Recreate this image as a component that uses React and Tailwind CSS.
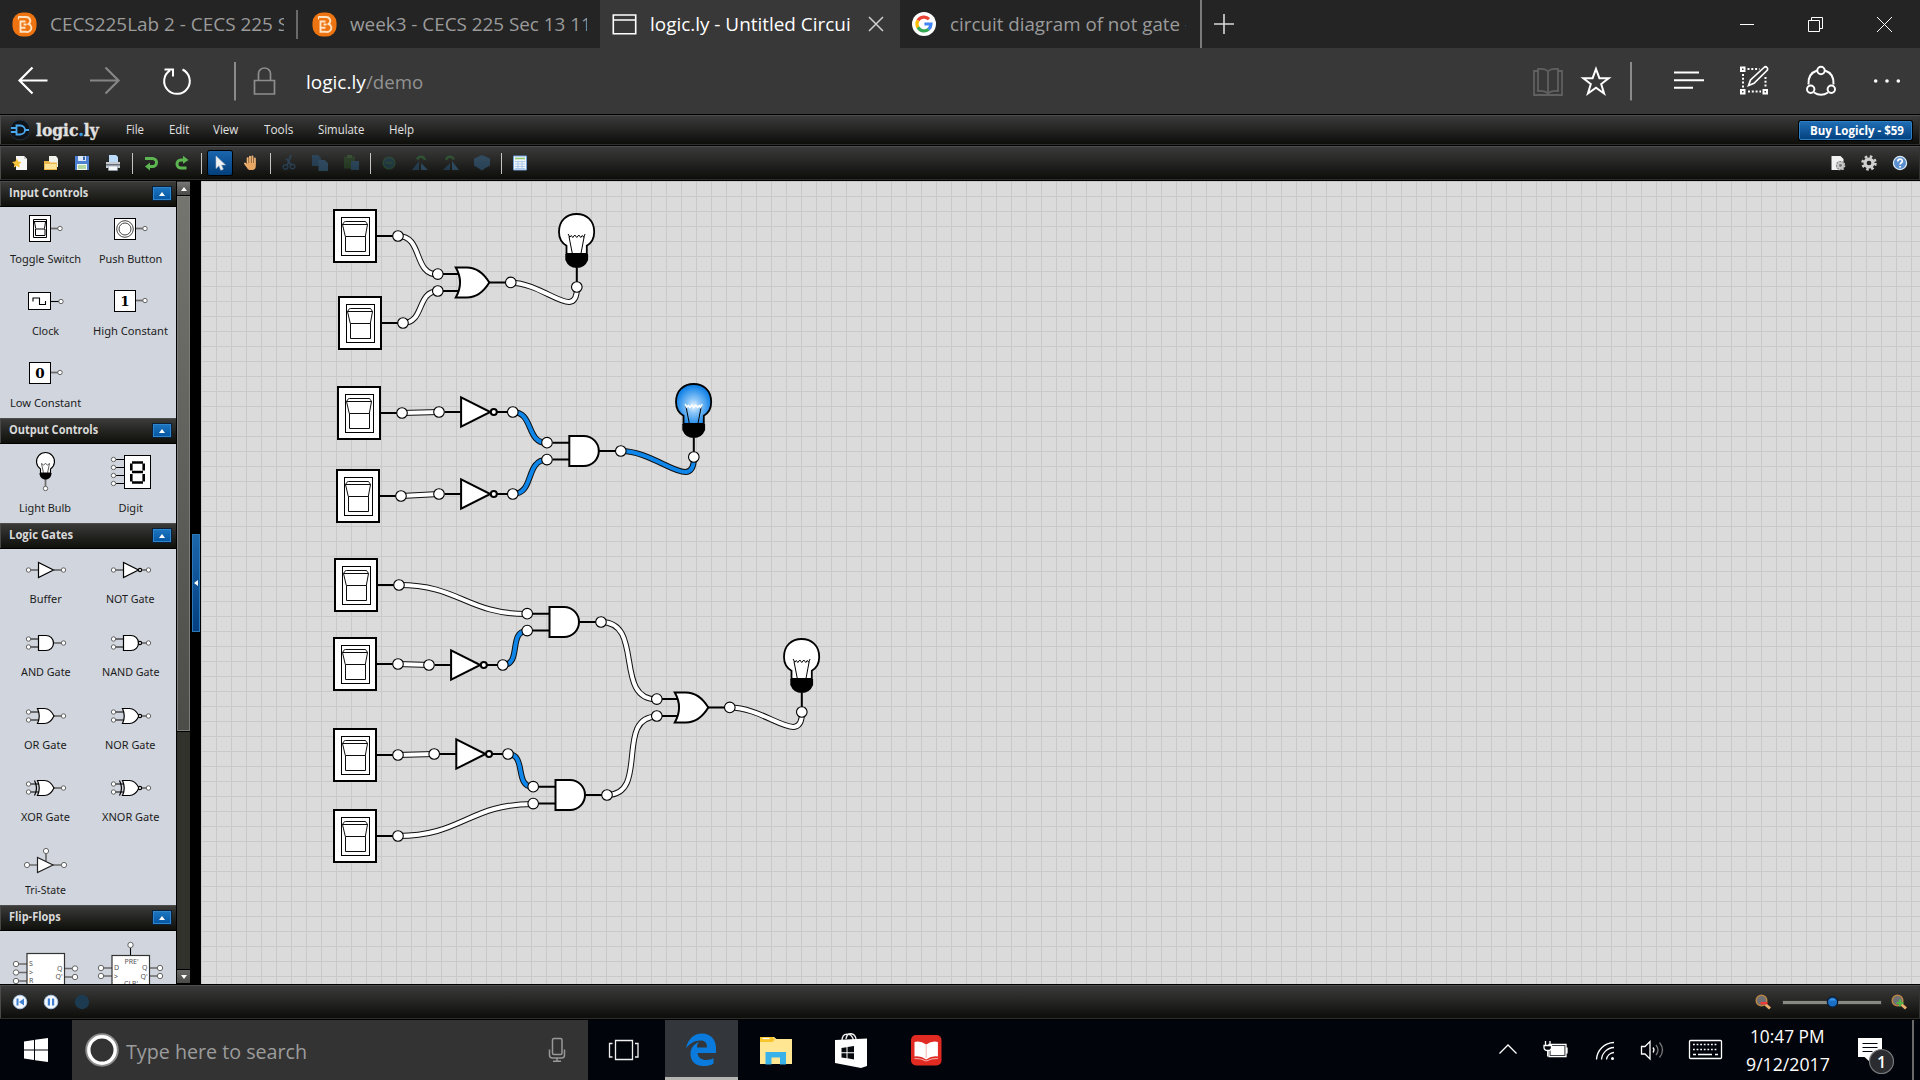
import React, { useLayoutEffect, useRef } from "react";

/* Text squeezed or stretched horizontally to a given width */
function Fit({ w, className = "", children }) {
  const ref = useRef(null);
  useLayoutEffect(() => {
    const el = ref.current;
    el.style.transform = `scaleX(${w / el.offsetWidth})`;
  }, [w, children]);
  return (
    <span className={"block whitespace-nowrap shrink-0 " + className} style={{ width: w }}>
      <span ref={ref} className="inline-block origin-left whitespace-pre">{children}</span>
    </span>
  );
}

/* ---------- Browser chrome ---------- */

function BFavicon() {
  return (
    <svg width="25" height="25" viewBox="0 0 25 25" className="shrink-0" fill="none">
      <rect x="0.5" y="0.5" width="24" height="24" rx="10" fill="#ee7411" />
      <path d="M6.500 5h7.500a4.200 3.900 0 0 1 2.600 7a4.300 4.100 0 0 1-2.600 7.800H8.500V9.500h5M8.500 15.800h5M11.500 12.500h3" stroke="#ffe2c2" strokeWidth="1.900" />
      <path d="M6.500 4.500v3" stroke="#ffe2c2" strokeWidth="1.200" />
    </svg>
  );
}

function GoogleIcon() {
  return (
    <svg width="24" height="24" viewBox="0 0 24 24" className="shrink-0" fill="none" strokeWidth="3.2">
      <circle cx="12" cy="12" r="12" fill="#fff" />
      <path d="M17 7.2A7 7 0 0 0 6 8.5" stroke="#ea4335" />
      <path d="M6 8.4a7 7 0 0 0 0 7.2" stroke="#fbbc05" />
      <path d="M6 15.4a7 7 0 0 0 10.6 1.9" stroke="#34a853" />
      <path d="M16.5 17.3A7 7 0 0 0 19 12h-6.6" stroke="#4285f4" />
    </svg>
  );
}

function Tab({ icon, width, clip, active, children, close }) {
  return (
    <div className={"h-12 flex items-center pl-3 shrink-0 w-[300px] " + (active ? "bg-[#383838] text-white" : "text-[#9b9b9b]")}>
      <div className="w-[38px] flex">{icon}</div>
      <div className="overflow-hidden text-[19px] leading-[30px]" style={{ width: clip }}>
        <Fit w={width}>{children}</Fit>
      </div>
      {close && (
        <svg width="16" height="16" viewBox="0 0 16 16" className="ml-[17px]" stroke="#d0d0d0" strokeWidth="1.5">
          <path d="M1 1l14 14M15 1L1 15" />
        </svg>
      )}
    </div>
  );
}

function TabStrip() {
  return (
    <div className="h-12 bg-[#242424] flex items-center">
      <Tab icon={<BFavicon />} width={238} clip={234}>CECS225Lab 2 - CECS 225 S</Tab>
      <div className="w-[2px] h-[29px] bg-[#6a6a6a] -ml-1 mr-[2px]" />
      <Tab icon={<BFavicon />} width={242} clip={237}>week3 - CECS 225 Sec 13 11</Tab>
      <Tab
        active
        close
        width={201}
        clip={201}
        icon={
          <svg width="25" height="21" viewBox="0 0 25 21" fill="none" stroke="#fff" strokeWidth="1.6">
            <path d="M1.3 1h22.4v18.7H1.3zM1.3 6h22.4" />
          </svg>
        }
      >
        logic.ly - Untitled Circui
      </Tab>
      <Tab icon={<GoogleIcon />} width={241} clip={236}>circuit diagram of not gate -</Tab>
      <div className="w-[2px] h-12 bg-[#7a7a7a]" />
      <svg width="20" height="20" viewBox="0 0 20 20" className="ml-3" stroke="#d8d8d8" strokeWidth="1.6">
        <path d="M10 0v20M0 10h20" />
      </svg>
      <svg width="180" height="48" viewBox="1740 0 180 48" className="ml-auto" fill="none" stroke="#fff" strokeWidth="1">
        <path d="M1739 24.5h15" />
        <path d="M1808.5 20.5h11v11h-11zM1811.500 20.500v-3h11v11h-3M1877 17l15 15M1892 17l-15 15" />
      </svg>
    </div>
  );
}

function AddressBar() {
  return (
    <div className="h-[66px] bg-[#383838] flex items-center">
      <svg width="290" height="66" viewBox="0 48 290 66" fill="none" strokeWidth="2.2" stroke="#fff">
        <path d="M47.500 80.500h-28M32.500 67.500l-13 13l13 13" />
        <path d="M90 80.500h28M105.500 67.500l13 13l-13 13" stroke="#858585" />
        <path d="M182.500 69.500a12.800 12.800 0 1 1-12.500 0.800M164.500 69.500h8.500v7" strokeWidth="2" />
        <path d="M235 62v38.500" stroke="#8a8a8a" strokeWidth="2" />
        <path d="M254.500 80.500h20v13.500h-20zM258.500 80v-6.500a6 5.500 0 0 1 12 0v6.500" stroke="#8d8d8d" strokeWidth="1.7" />
      </svg>
      <div className="flex ml-4 text-[19px] leading-[30px] mb-[-2px]">
        <Fit w={60} className="text-white">logic.ly</Fit>
        <Fit w={57} className="text-[#929292]">/demo</Fit>
      </div>
      <svg width="400" height="66" viewBox="1520 48 400 66" className="ml-auto" fill="none" stroke="#fff" strokeWidth="2">
        <g stroke="#606060" strokeWidth="1.8">
          <path d="M1538 71h-4v24h28v-24h-4M1548 71.500c-2.500-3-7-2.800-10-2.500v22c3-.3 7.500-.3 10 2.800c2.500-3.100 7-3.100 10-2.800v-22c-3-.3-7.500-.5-10 2.500zM1548 71v23" />
        </g>
        <path d="M1596 69l3.400 9.200h9.300l-7.500 5.800l2.900 9.500l-8.100-5.700l-8.100 5.700l2.900-9.500l-7.500-5.800h9.300z" />
        <path d="M1631 62v38.500" stroke="#8a8a8a" />
        <path d="M1674 72.500h25M1674 80.200h30M1674 87.700h19" />
        <path d="M1747.500 69h12M1743 74v13.500M1748 91.500h13M1765.500 77v10.500" strokeDasharray="2 1.800" />
        <path d="M1741 67.500h3.500v3.500h-3.500zM1741 90h3.500v3.500h-3.500zM1763.500 90h3.500v3.500h-3.500z" />
        <path d="M1748.500 85.500l2-5.500l13.500-12.500a2 2 0 0 1 3 3l-13 12.800z" strokeWidth="1.700" />
        <path d="M1825 70.500c6 2 9 7 8.500 14M1817 70.500c-6 2-9 7-8.500 14M1814 92.500c4.500 3 9.500 3 14 0" />
        <circle cx="1821" cy="70.500" r="3.700" />
        <circle cx="1810.700" cy="89.300" r="3.700" />
        <circle cx="1831.300" cy="89.300" r="3.700" />
        <g fill="#fff" stroke="none">
          <circle cx="1875.700" cy="81" r="1.800" />
          <circle cx="1887" cy="81" r="1.800" />
          <circle cx="1898.300" cy="81" r="1.800" />
        </g>
      </svg>
    </div>
  );
}

/* ---------- Application bars ---------- */

const BAR =
  "flex items-center border-t border-b border-t-[#4c4c4c] border-b-[#2e2e2e] bg-linear-to-b from-[#3a3a3a] via-[#242423] to-[#0d0d0a] shadow-[inset_1px_0_0_#4a4a4a,inset_-1px_0_0_#333]";

function MenuBar() {
  const items = [
    ["File", 18, 43.3],
    ["Edit", 20, 44.7],
    ["View", 25, 50.2],
    ["Tools", 29.500, 54],
    ["Simulate", 46.500, 71.500],
    ["Help", 25, 60],
  ];
  return (
    <div className={"h-[30px] mt-px " + BAR}>
      <svg width="22" height="22" viewBox="0 0 22 22" className="ml-[9px] shrink-0" fill="none">
        <circle cx="11" cy="11" r="10" fill="#101419" stroke="#223040" />
        <path d="M7.500 6.500h3.500c3.500 0 5 2.500 5 4.500s-1.500 4.500-5 4.500H7.500zM2 9h5.500M2 13h5.500M16 11h4" stroke="#4aa8ee" strokeWidth="1.800" />
      </svg>
      <div className="ml-[5px] mt-[-1px] text-[17px] leading-[26px] font-bold text-[#e0e0e0] font-[DejaVu_Serif,serif] [-webkit-text-stroke:0.4px]">
        <Fit w={63}>
          logic<span className="text-[#3a9be8]">.</span>ly
        </Fit>
      </div>
      <div className="flex ml-[26.500px] text-[12px] leading-4 text-[#e2e2e2]">
        {items.map(([t, w, cell]) => (
          <div key={t} className="shrink-0" style={{ width: cell }}>
            <Fit w={w}>{t}</Fit>
          </div>
        ))}
      </div>
      <div className="ml-auto mr-[8px] w-[113px] h-[19px] mt-px pl-[9.500px] rounded-[2px] border border-[#2f7fc4] bg-linear-to-b from-[#1f6db4] to-[#044280] ring-1 ring-black text-white font-bold text-[12px] leading-[17px]">
        <Fit w={94}>Buy Logicly - $59</Fit>
      </div>
    </div>
  );
}

function ToolIcon({ selected, dim, children }) {
  return (
    <div className="w-[31px] flex justify-center shrink-0">
      <div
        className={
          "w-6 h-6 flex items-center justify-center " +
          (selected ? "bg-linear-to-b from-[#1a66ae] to-[#043f7c] ring-1 ring-black rounded-[2px] " : "") +
          (dim ? "opacity-45" : "")
        }
      >
        <svg width="16" height="16" viewBox="0 0 16 16" fill="none">
          {children}
        </svg>
      </div>
    </div>
  );
}

function Sep() {
  return (
    <div className="w-[7px] flex justify-center shrink-0">
      <div className="w-px h-[21px] bg-[#c4c4c4]" />
    </div>
  );
}

function Gear({ cx, cy, r, color }) {
  return (
    <g>
      <circle cx={cx} cy={cy} r={r * 0.62} stroke={color} strokeWidth={r * 0.5} />
      <circle cx={cx} cy={cy} r={r} stroke={color} strokeWidth={r * 0.42} strokeDasharray={`${r * 0.393} ${r * 0.3927}`} />
    </g>
  );
}

function Toolbar() {
  return (
    <div className={"h-[34px] mt-px pl-[4.500px] " + BAR}>
      <ToolIcon>
        <path d="M4 1h8l3 3v11H4z" fill="#f6f6f6" />
        <path d="M12 1v3h3" fill="#ccc" />
        <path d="M4.800 3.500l1.500 3 3.200.5-2.300 2.300.5 3.300-2.900-1.600-3 1.600.6-3.300L0 7l3.300-.5z" fill="#f6c53c" />
      </ToolIcon>
      <ToolIcon>
        <path d="M6 1h7l2 2.500V12H6z" fill="#f1f1ec" />
        <path d="M1 6h5l1 1.500h7V15H1z" fill="#eab64a" />
        <path d="M2 9h11.500v5H2z" fill="#fbe397" />
      </ToolIcon>
      <ToolIcon>
        <path d="M1 1h14v14H1z" fill="#4d7fd0" />
        <path d="M4 1h8v5H4z" fill="#dbe8fa" />
        <path d="M9 1.500h2V5H9z" fill="#3a62a8" />
        <path d="M3 9h10v6H3z" fill="#f3f8ee" />
        <path d="M4 11h8M4 13h8" stroke="#74b658" strokeWidth="1.200" />
      </ToolIcon>
      <ToolIcon>
        <path d="M4 0h7l2 2v6H4z" fill="#bcdcfa" />
        <path d="M1 7h14v6H1z" fill="#c6cad0" />
        <path d="M1 9h14v1.500H1z" fill="#6a7078" />
        <path d="M3.500 11h9v4.500h-9z" fill="#f4f6f8" stroke="#8ca0b4" strokeWidth=".6" />
      </ToolIcon>
      <Sep />
      <ToolIcon>
        <path d="M2 3.500h7.500a4 4 0 0 1 0 8H6" stroke="#5db552" strokeWidth="3" />
        <path d="M7 7.500v8L2 11.500z" fill="#5db552" />
      </ToolIcon>
      <ToolIcon>
        <path d="M12.500 13H7a4 4 0 0 1 0-8h3" stroke="#5db552" strokeWidth="3" />
        <path d="M9 .8v8L14.500 5z" fill="#5db552" />
      </ToolIcon>
      <Sep />
      <ToolIcon selected>
        <path d="M4 1v12.500l3-2.800 1.800 4.500 2.500-1-1.900-4.300H13.500z" fill="#f2f2f2" stroke="#b5bfca" strokeWidth=".6" />
      </ToolIcon>
      <ToolIcon>
        <path d="M4.700 9V3.200M7 8V1.800M9.400 8V1.600M11.800 8.500V3.400M2 8.500l3 4" stroke="#f0b678" strokeWidth="2" strokeLinecap="round" />
        <path d="M3.800 8h9v3c0 2.500-1.500 4-3.500 4H7c-2 0-3.200-2-3.200-4z" fill="#e8a763" />
        <path d="M5.900 3v5M8.200 2.500V8M10.600 3v5" stroke="#8a4f1c" strokeWidth=".5" />
      </ToolIcon>
      <Sep />
      <ToolIcon dim>
        <path d="M10 0L6.500 10M5 3.500l6 7" stroke="#33638c" strokeWidth="1.800" />
        <circle cx="4.500" cy="12" r="2.300" stroke="#33638c" strokeWidth="1.500" />
        <circle cx="11.500" cy="11.500" r="2.300" stroke="#33638c" strokeWidth="1.500" />
      </ToolIcon>
      <ToolIcon dim>
        <path d="M0 0h6l3 3v8H0z" fill="#2c618f" />
        <path d="M6.500 5h6l3.500 3v8H6.500z" fill="#3c74a3" />
      </ToolIcon>
      <ToolIcon dim>
        <path d="M1 1.500h11v12H1z" fill="#315c2c" />
        <path d="M4 0h5v3H4z" fill="#4a7a40" />
        <path d="M8 6h8v9H8z" fill="#356a97" />
      </ToolIcon>
      <Sep />
      <ToolIcon dim>
        <circle cx="8" cy="8" r="5.800" stroke="#2f6b45" strokeWidth="1.600" fill="#1f4f6a" />
        <path d="M4.500 8h7" stroke="#2f6b45" strokeWidth="2" />
      </ToolIcon>
      <ToolIcon dim>
        <path d="M0 15h7V6z" fill="#2c5f8a" />
        <path d="M9 8v7h7z" fill="#3f78a8" />
        <path d="M5 4.500c2-4 7-3.500 8 .5" stroke="#36803a" strokeWidth="2.400" />
      </ToolIcon>
      <ToolIcon dim>
        <path d="M16 15H9V6z" fill="#3f78a8" />
        <path d="M7 8v7H0z" fill="#2c5f8a" />
        <path d="M11 4.500c-2-4-7-3.500-8 .5" stroke="#36803a" strokeWidth="2.400" />
      </ToolIcon>
      <ToolIcon dim>
        <path d="M8 0l3.500 1.500L16 3.500v7l-4.500 2.500L8 15.500l-4-2.500L0 10.500v-7l4.500-2z" fill="#3a709c" />
      </ToolIcon>
      <Sep />
      <ToolIcon>
        <path d="M1.500 1h13v14h-13z" fill="#eef5fd" stroke="#6f9fd6" />
        <path d="M3 3.500h10" stroke="#8cc46c" strokeWidth="1.500" />
        <path d="M3 6.500h10M3 9h10M3 11.500h10M3 13.500h10M6 6v8M10 6v8" stroke="#a3c2e4" strokeWidth=".8" />
      </ToolIcon>
      <div className="ml-auto flex pr-[4.500px]">
        <ToolIcon>
          <path d="M1.500 1h9l3 3v11h-12z" fill="#f2f2f2" />
          <circle cx="10.500" cy="10.500" r="4.500" fill="#777" />
          <Gear cx={10.5} cy={10.5} r={4} color="#c9c9c9" />
        </ToolIcon>
        <ToolIcon>
          <Gear cx={8} cy={8} r={6.4} color="#cfcfcf" />
        </ToolIcon>
        <ToolIcon>
          <circle cx="8" cy="8" r="6.600" fill="#5b8fd0" stroke="#dce9f7" strokeWidth="1.200" />
          <path d="M5.800 6.500c0-3 4.500-3 4.500-.3c0 1.600-2.200 1.600-2.200 3.300M8.100 11v1.600" stroke="#fff" strokeWidth="1.700" />
        </ToolIcon>
      </div>
    </div>
  );
}

/* ---------- Palette ---------- */

const Dot = ({ x, y, r = 2.2 }) => <circle cx={x} cy={y} r={r} fill="#fff" stroke="#555" strokeWidth="0.9" />;
const Lead = ({ d, thin }) => <path d={d} stroke={thin ? "#000" : "#6b6b6b"} strokeWidth={thin ? 1.1 : 1.7} />;

const boxed = (inner) => (
  <>
    <Lead d="M48 21.500h7" />
    <Dot x={57} y={21.5} />
    <rect x="26.500" y="11.500" width="21" height="21" fill="#fff" stroke="#000" />
    {inner}
  </>
);

const Gate = ({ two, bubble, children }) => (
  <>
    {two ? (
      <>
        <Lead thin d="M28 17h10M28 25h10" />
        <Dot x={25.5} y={17} />
        <Dot x={25.5} y={25} />
      </>
    ) : (
      <>
        <Lead d="M28 21h8" />
        <Dot x={25.5} y={21} />
      </>
    )}
    <Lead d={bubble ? "M53 21h5.500" : "M51 21h7.500"} />
    <Dot x={60.5} y={21} />
    <g fill="#fff" stroke="#000" strokeWidth="1.200">
      {children}
      {bubble && <circle cx="52" cy="21" r="1.600" />}
    </g>
  </>
);

const TRI = <path d="M35.500 13.500v15l15-7.500z" />;
const AND = <path d="M35.500 13.500h7.500a7.500 7.500 0 0 1 0 15h-7.500z" />;
const OR = <path d="M34.500 13.500h7c4 0 7.500 3.500 9.500 7.500c-2 4-5.500 7.500-9.500 7.500h-7q3.500-7.500 0-15z" />;
const XOR = (
  <>
    <path d="M31.500 13.500q4 7.500 0 15" fill="none" />
    {OR}
  </>
);

const FF = ({ x, y, children }) => (
  <text x={x} y={y} fill="#555" className="text-[7px] font-[Noto_Sans,sans-serif]">
    {children}
  </text>
);

const SECTIONS = [
  {
    title: "Input Controls",
    tw: 79,
    body: "h-[211px]",
    cell: 72,
    h: 44,
    items: [
      ["Toggle Switch", 71, (
        <>
          <Lead d="M48 21.500h7" />
          <Dot x={57} y={21.5} />
          <rect x="26.500" y="8.500" width="21" height="26" fill="#fff" stroke="#000" />
          <path d="M30.500 12.500h13v18h-13zM30.500 14.500h13M31.500 15l1.200 6.500M42.500 15l-1 6.500M32.500 22h9.500M32.500 22v6.500h9.500V22" stroke="#000" strokeWidth="1" />
        </>
      )],
      ["Push Button", 63.5, boxed(
        <g stroke="#444">
          <circle cx="37" cy="22" r="8.300" />
          <circle cx="37" cy="22" r="6" />
        </g>
      )],
      ["Clock", 27.5, (
        <>
          <Lead thin d="M48 22.500h8" />
          <Dot x={58} y={22.5} />
          <rect x="25.500" y="13.500" width="22" height="17" fill="#fff" stroke="#000" />
          <path d="M30 22.500v-3.500h6.500v6.500h6v-3.500" stroke="#000" strokeWidth="1.100" />
        </>
      )],
      ["High Constant", 75, boxed(
        <text x="37" y="27" textAnchor="middle" fill="#000" className="text-[13.5px] font-bold font-[DejaVu_Serif,serif]">1</text>
      )],
      ["Low Constant", 71, boxed(
        <text x="37" y="27" textAnchor="middle" fill="#000" className="text-[13.5px] font-bold font-[DejaVu_Serif,serif]">0</text>
      )],
    ],
  },
  {
    title: "Output Controls",
    tw: 89,
    body: "h-[79px]",
    cell: 79,
    h: 56,
    items: [
      ["Light Bulb", 52.5, (
        <>
          <Lead d="M42.500 35v8" />
          <Dot x={42.5} y={44.5} />
          <path d="M37.500 29v-4a9 9 0 1 1 10 0v4z" fill="#fff" stroke="#000" strokeWidth="1.100" />
          <path d="M36.500 29h12c0 4-2.500 6.500-6 6.500s-6-2.500-6-6.500z" fill="#000" />
          <path d="M40.500 29l-2-9.500l2 1.500l2-1.500l2 1.500l2-1.500l-2 9.500" stroke="#333" strokeWidth=".8" />
        </>
      )],
      ["Digit", 24, (
        <>
          <Lead thin d="M28 15.500h8M28 23.500h8M28 31.500h8M28 39.500h8" />
          <Dot x={25.5} y={15.5} />
          <Dot x={25.5} y={23.5} />
          <Dot x={25.5} y={31.5} />
          <Dot x={25.5} y={39.5} />
          <rect x="36.500" y="11.500" width="26" height="33" fill="#fff" stroke="#000" />
          <path d="M44 18.500h11M44 28h11M44 38.500h11" stroke="#000" strokeWidth="2.600" />
          <path d="M43.300 19.500v7M55.700 19.500v7M43.300 30v7.500M55.700 30v7.500" stroke="#000" strokeWidth="2.600" />
        </>
      )],
    ],
  },
  {
    title: "Logic Gates",
    tw: 64,
    body: "h-[356px]",
    cell: 72.75,
    h: 42,
    items: [
      ["Buffer", 32, <Gate>{TRI}</Gate>],
      ["NOT Gate", 48.5, <Gate bubble>{TRI}</Gate>],
      ["AND Gate", 50, <Gate two>{AND}</Gate>],
      ["NAND Gate", 57.5, <Gate two bubble>{AND}</Gate>],
      ["OR Gate", 43, <Gate two>{OR}</Gate>],
      ["NOR Gate", 50.5, <Gate two bubble>{OR}</Gate>],
      ["XOR Gate", 49, <Gate two>{XOR}</Gate>],
      ["XNOR Gate", 57, <Gate two bubble>{XOR}</Gate>],
      ["Tri-State", 41, (
        <>
          <Lead d="M26 25h9M49 25h9M43 13v8" />
          <Dot x={24} y={25} r={2.6} />
          <Dot x={61} y={25} r={2.6} />
          <Dot x={43} y={11} r={2.6} />
          <path d="M34.500 17.500v15l15.500-7.500z" fill="#fff" stroke="#222" strokeWidth="1.200" />
        </>
      )],
    ],
  },
  {
    title: "Flip-Flops",
    tw: 52,
    body: "h-[53px]",
    cell: 80,
    h: 64,
    items: [
      ["SR Flip-Flop", 64, (
        <>
          <Lead d="M15 33h9M15 41.500h9M15 50h9M61 37.500h9M61 46h9" />
          {[33, 41.5, 50].map((y) => <Dot key={y} x={13} y={y} r={2.7} />)}
          {[37.5, 46].map((y) => <Dot key={y} x={72} y={y} r={2.7} />)}
          <rect x="24" y="22.500" width="37.500" height="50" fill="#fff" stroke="#333" strokeWidth="1.200" />
          <FF x={26} y={35}>S</FF>
          <FF x={26} y={44}>&gt;</FF>
          <FF x={26} y={52}>R</FF>
          <FF x={54} y={39.5}>Q</FF>
          <FF x={52.5} y={48}>Q'</FF>
        </>
      )],
      ["D Flip-Flop", 60, (
        <>
          <Lead d="M15 37h9M15 45h9M61 37h9M61 45h9" />
          <Lead thin d="M42.500 17v8" />
          {[37, 45].map((y) => <Dot key={y} x={13} y={y} r={2.7} />)}
          {[37, 45].map((y) => <Dot key={y} x={72} y={y} r={2.7} />)}
          <Dot x={42.5} y={14} r={2.7} />
          <rect x="24" y="24.500" width="37.500" height="50" fill="#fff" stroke="#333" strokeWidth="1.200" />
          <FF x={36.5} y={32.5}>PRE'</FF>
          <FF x={26} y={39}>D</FF>
          <FF x={26} y={48}>&gt;</FF>
          <FF x={54} y={39}>Q</FF>
          <FF x={52.5} y={47.5}>Q'</FF>
          <FF x={36} y={54.5}>CLR'</FF>
        </>
      )],
    ],
  },
];

function Palette() {
  return (
    <div className="w-[176px] h-full overflow-hidden shrink-0">
      {SECTIONS.map((s) => (
        <div key={s.title}>
          <div className="h-[25px] flex items-start pl-[9px] pr-1 border-t border-t-[#4c4c4c] bg-linear-to-b from-[#3b3b39] to-[#0f0f0c] shadow-[inset_1px_0_0_#484848]">
            <Fit w={s.tw} className="font-bold text-[12px] leading-[22px] text-[#dadada]">{s.title}</Fit>
            <div className="ml-auto mt-1 w-5 h-[15px] border border-[#0a2038] p-px bg-[#2f86cc]">
              <div className="h-full bg-linear-to-b from-[#1c74bf] to-[#0758a4] flex items-center justify-center">
                <div className="border-x-[3px] border-x-transparent border-b-[4px] border-b-white" />
              </div>
            </div>
          </div>
          <div className="h-px bg-black" />
          <div className={"pl-[3px] overflow-hidden bg-[#d1d5dd] " + s.body}>
            <div className="grid grid-cols-[85px_85px]">
              {s.items.map(([label, w, icon]) => (
                <div key={label} className="flex flex-col items-center" style={{ height: s.cell }}>
                  <svg width="85" height={s.h} viewBox={`0 0 85 ${s.h}`} fill="none" className="shrink-0">
                    {icon}
                  </svg>
                  <Fit w={w} className="text-[11px] leading-4 text-[#1c1c1c] font-[Noto_Sans,sans-serif]">{label}</Fit>
                </div>
              ))}
            </div>
          </div>
        </div>
      ))}
    </div>
  );
}

function Scrollbar() {
  return (
    <div className="w-[13px] ml-px h-full flex flex-col shrink-0 bg-[#32322d]">
      <div className="h-[14px] mt-px bg-linear-to-b from-[#777] to-[#4a4a48] border-b border-black flex items-center justify-center">
        <div className="border-x-[3px] border-x-transparent border-b-[4px] border-b-white" />
      </div>
      <div className="h-[535px] bg-linear-to-b from-[#74756f] to-[#4c4d49] border border-[#7c7d78]" />
      <div className="h-px bg-black" />
      <div className="mt-auto h-[15px] border-y border-black bg-linear-to-b from-[#686866] to-[#4a4a48] flex items-center justify-center">
        <div className="border-x-[3px] border-x-transparent border-t-[4px] border-t-white" />
      </div>
    </div>
  );
}

/* ---------- Circuit canvas ---------- */

const Node = ({ x, y }) => <circle cx={x} cy={y} r="5.300" fill="#fff" stroke="#000" strokeWidth="1.100" />;

const Switch = ({ x, y }) => (
  <g transform={`translate(${x} ${y})`} stroke="#000" fill="none">
    <path d="M-22 0H-5" strokeWidth="2" />
    <rect x="-64" y="-26" width="42" height="52" fill="#fff" strokeWidth="2" />
    <rect x="-56.500" y="-18.500" width="28" height="38" />
    <path d="M-55.500 -11.500H-30.500M-55.500 -11.500L-54 -13.800Q-53.500 -14.500 -52.500 -14.500H-33Q-32 -14.500 -31.700 -13.500L-30.500 -11.500L-32.700 0.500M-55.500 -11.500L-52.700 0.500M-52.500 0.500H-32.500V15.500H-52.500Z" strokeWidth="0.950" />
    <Node x={0} y={0} />
  </g>
);

const Not = ({ x, y }) => (
  <g transform={`translate(${x} ${y})`} stroke="#000" fill="#fff" strokeWidth="2">
    <path d="M-68 0H-52M-16 0H-5" />
    <path d="M-51.700 -14.700V14.700L-22.500 0Z" />
    <circle cx="-19" cy="0" r="3" />
    <Node x={-73.800} y={0} />
    <Node x={0} y={0} />
  </g>
);

const Two = ({ x, y, or }) => (
  <g transform={`translate(${x} ${y})`} stroke="#000" fill="#fff" strokeWidth="2">
    <path d="M-68 -8.300H-51M-68 8.500H-51M-22 0H-5" />
    {or ? (
      <path d="M-55 -15H-44C-34 -15 -27 -9 -21.500 0C-27 9 -34 15 -44 15H-55Q-46.500 0 -55 -15Z" />
    ) : (
      <path d="M-51.500 -15H-37A15 15 0 0 1 -37 15H-51.500Z" />
    )}
    <Node x={or ? -73 : -73.800} y={-8.3} />
    <Node x={or ? -73 : -73.800} y={8.6} />
    <Node x={0} y={0} />
  </g>
);

const Bulb = ({ x, y, lit }) => (
  <g transform={`translate(${x} ${y})`} stroke="#000" fill="none">
    <path d="M0 -19V-5" strokeWidth="2" />
    <path
      d="M-10.300 -33V-41.300C-15 -44 -17.800 -49.500 -17.800 -55C-17.800 -66.500 -10 -73 -0.200 -73C9.600 -73 17.400 -66.500 17.400 -55C17.400 -49.500 14.600 -44 10 -41.300V-33Z"
      fill={lit ? "url(#glow)" : "#fff"}
      strokeWidth="1.800"
    />
    <path d="M-11.500 -33H11.300V-27Q8 -19 0 -19Q-8.200 -19 -11.500 -27Z" fill="#000" stroke="none" />
    <path d="M-7.800 -50.500L-4.500 -33.500M7.400 -50.500L4.200 -33.500" strokeWidth="1" />
    <path d="M-8.700 -53L-7 -49.800L-5.500 -51.500L-4 -49.500L-2 -52L0 -49.500L2 -52L4 -49.500L5.500 -51.500L6.800 -49.800L8.300 -53" stroke={lit ? "#fff" : "#000"} strokeWidth={lit ? 1.5 : 1} />
    <Node x={0} y={0} />
  </g>
);

const Wire = ({ d, on }) => (
  <g fill="none">
    <path d={d} stroke="#111" strokeWidth="6" />
    <path d={d} stroke={on ? "#0f86ea" : "#fff"} strokeWidth="4" />
  </g>
);

/* Horizontal tangents at both ends, with handles that grow with the distance */
const sCurve = (x1, y1, x2, y2) => {
  const k = Math.hypot(x2 - x1, y2 - y1) * 0.46;
  return `M${x1} ${y1}C${x1 + k} ${y1} ${x2 - k} ${y2} ${x2} ${y2}`;
};

const WIRES = [
  [sCurve(398, 236, 438, 274.5)],
  [sCurve(403, 323, 438, 291.3)],
  ["M511 282.700C545 283 577 323 577 287"],
  ["M402 413L439 412"],
  ["M401 496L439 494"],
  [sCurve(512.7, 412, 547, 443), true],
  [sCurve(512.7, 494, 547, 459.8), true],
  ["M621 451C658 451 694 494 694 457", true],
  [sCurve(399, 585, 527, 614)],
  ["M398 664L429 665"],
  [sCurve(503, 665, 527, 631), true],
  ["M398 755L434 754"],
  [sCurve(508, 754, 533, 787), true],
  [sCurve(398, 836, 533, 804)],
  [sCurve(601, 622, 657, 699.5)],
  [sCurve(607, 795, 657, 716.5)],
  ["M730 707.500C767 707.500 802 748 802 712"],
];

function Canvas() {
  return (
    <div className="flex-1 h-full bg-[#dbdbdb] bg-[linear-gradient(to_right,#c9c9c9_1px,transparent_1px),linear-gradient(to_bottom,#c9c9c9_1px,transparent_1px)] bg-[size:15px_15px]">
      <svg width="1719" height="803" viewBox="201 181 1719 803" className="block">
        <defs>
          <radialGradient id="glow" cx="0.5" cy="0.55" r="0.5">
            <stop offset="0" stopColor="#e8f4ff" />
            <stop offset="0.35" stopColor="#8cc6f8" />
            <stop offset="1" stopColor="#1483e6" />
          </radialGradient>
        </defs>
        {WIRES.map(([d, on]) => <Wire key={d} d={d} on={on} />)}
        <Switch x={398} y={236} />
        <Switch x={403} y={323} />
        <Switch x={402} y={413} />
        <Switch x={401} y={496} />
        <Switch x={399} y={585} />
        <Switch x={398} y={664} />
        <Switch x={398} y={755} />
        <Switch x={398} y={836} />
        <Two or x={510.8} y={282.4} />
        <Two or x={729.8} y={707.4} />
        <Two x={620.8} y={451} />
        <Two x={601} y={622} />
        <Two x={607} y={795} />
        <Not x={512.8} y={412} />
        <Not x={512.8} y={494} />
        <Not x={502.8} y={665} />
        <Not x={508} y={754} />
        <Bulb x={576.8} y={287} />
        <Bulb x={693.8} y={457} lit />
        <Bulb x={801.8} y={712} />
      </svg>
    </div>
  );
}

/* ---------- Bottom bars ---------- */

function Magnifier({ plus }) {
  return (
    <svg width="16" height="16" viewBox="0 0 16 16" fill="none" className="shrink-0">
      <path d="M10 10l5 4.500" stroke="#e8b070" strokeWidth="3" />
      <circle cx="6.500" cy="6.500" r="5.300" fill="#6f7073" stroke="#b98544" strokeWidth="1.500" />
      {plus ? (
        <path d="M9 5.500v7M5.500 9h7" stroke="#54b348" strokeWidth="2.200" />
      ) : (
        <path d="M5.500 9.200h7" stroke="#f03a3a" strokeWidth="2.400" />
      )}
    </svg>
  );
}

function SimulationBar() {
  return (
    <div className={"h-[34px] mt-px pl-3 pr-[13px] " + BAR}>
      <svg width="78" height="16" viewBox="12 0 78 16" fill="none">
        <circle cx="20" cy="8" r="6.800" fill="#f2f7fd" stroke="#a9c4e6" />
        <path d="M24 4.500v7l-5-3.500zM16.500 4.500h2v7h-2z" fill="#3f7fd0" />
        <circle cx="51" cy="8" r="6.800" fill="#f2f7fd" stroke="#a9c4e6" />
        <path d="M47.800 4.500h2.200v7h-2.200zM52 4.500h2.200v7h-2.200z" fill="#3f7fd0" />
        <circle cx="82" cy="8" r="7.200" fill="#1d3b50" />
      </svg>
      <div className="ml-auto flex items-center">
        <Magnifier />
        <svg width="120" height="14" viewBox="1771 -0.500 120 14">
          <rect x="1782.500" y="5" width="99" height="4" rx="1" fill="#8a8a85" stroke="#222" strokeWidth=".8" />
          <circle cx="1832.500" cy="6.500" r="5.200" fill="#1a6fc4" stroke="#071a33" strokeWidth="1.200" />
          <path d="M1829 5a4 4 0 0 1 7 0z" fill="#3f95e4" />
        </svg>
        <Magnifier plus />
      </div>
    </div>
  );
}

function Taskbar() {
  return (
    <div className="h-[60px] mt-px bg-[#01040a] flex items-stretch">
      <svg width="72" height="60" viewBox="0 0 72 60" fill="#fff">
        <path d="M24 21.500l10-1.500v9.500H24zM35 19.800l13-1.800v11.500H35zM24 30.500h10V40l-10-1.500zM35 30.500h13V42l-13-1.800z" />
      </svg>
      <div className="w-[516px] bg-[#333] flex items-center">
        <svg width="36" height="36" viewBox="0 0 36 36" className="ml-3" fill="none">
          <circle cx="18" cy="18" r="15.500" stroke="#8e8e8e" strokeWidth="2.500" />
          <circle cx="18" cy="18" r="13.200" stroke="#fff" strokeWidth="3.400" />
        </svg>
        <Fit w={181} className="ml-[6px] text-[20px] leading-[30px] mt-[3px] text-[#9c9c9c]">Type here to search</Fit>
        <svg width="18" height="26" viewBox="0 0 18 26" className="ml-auto mr-[22px]" fill="none" stroke="#999" strokeWidth="1.500">
          <rect x="4.500" y="1.500" width="9.500" height="16" rx="1.500" />
          <path d="M1.500 12.500v5.500q0 3 3 3h9q3 0 3-3v-5.500M9 21v3.500M5 24.300h8" />
        </svg>
      </div>
      <svg width="77" height="60" viewBox="588 1020 77 60" fill="none" stroke="#f0f0f0" strokeWidth="1.300">
        <path d="M615.500 1040.500h17v19h-17zM612.500 1043.500h-3v13.500h3M635 1043.500h3v13.500h-3" />
      </svg>
      <div className="w-[73px] bg-[#33373b] border-b-[3px] border-[#b4b4b0]">
        <svg width="73" height="57" viewBox="665 1020 73 57">
          <path
            d="M686 1048.500C688 1038 695 1033.500 702 1033.500C711 1033.500 716 1040 716 1048V1053H697.500C698 1058 702 1060 706 1060C709.500 1060 712 1059 713.500 1058V1063.500C711 1065.500 707 1066 703 1066C695 1066 690.500 1060.500 690.500 1054C690.500 1048 694 1044 699 1042C697.500 1043.500 697 1045.500 697 1047.500H707C707 1043 705 1040.500 700.500 1040.500C694.500 1040.500 689 1044 686 1048.500Z"
            fill="#0a7bdc"
          />
        </svg>
      </div>
      <svg width="212" height="60" viewBox="738 1020 212 60" fill="none">
        <path d="M760 1037h14l2.500 2H792v25h-32z" fill="#ffe693" />
        <path d="M760 1037h12.500l2.500 2.500l-2.500 2.500H760z" fill="#f8c62c" />
        <path d="M762.500 1038.500h7" stroke="#fff" strokeWidth="1.200" />
        <path d="M765.500 1064.500v-12.500h20.500v12.500h-6v-7h-8.500v7z" fill="#38b2e8" />
        <path d="M842 1041c0-9 9-9 11.500-1M846 1039c1-8 9-6 10 0" stroke="#eee" strokeWidth="1.400" />
        <path d="M835 1040l32-1.500v27.500l-6 2l-26-5z" fill="#fff" />
        <path d="M841.500 1048l5-.8v5h-5zM847.500 1047l6.500-1v6.200h-6.500zM841.500 1053.200h5v5l-5-.8zM847.500 1053.200h6.500v6.300l-6.500-1.200z" fill="#06090d" />
        <rect x="911" y="1035" width="30.500" height="30.500" rx="5" fill="#e02a22" />
        <path d="M914.500 1042q6-1.500 11.700 2.500q5.800-4 11.700-2.500v14.500q-6-1-11.700 3q-5.700-4-11.700-3z" fill="#fff" />
        <path d="M926.200 1045v13M914.500 1058.500q6-.5 11.700 2.500q5.700-3 11.700-2.500" stroke="#f3b4ae" strokeWidth="1" />
      </svg>
      <svg width="250" height="60" viewBox="1485 1020 250 60" className="ml-auto" fill="none" stroke="#fff" strokeWidth="1.300">
        <path d="M1499.500 1053.500l8.500-8.500l8.500 8.500" />
        <path d="M1549 1044.500h17v12h-17zM1567 1047.500v6" />
        <path d="M1550.500 1046h14v9h-14z" fill="#fff" stroke="none" />
        <path d="M1545.500 1041v4M1550 1041v4M1544 1045.500h7.500v2q0 3-3.700 3q-3.800 0-3.800-3zM1547.700 1050v6.500" fill="#01040a" />
        <path d="M1614 1042.500a18 18 0 0 0-17.500 17M1614 1047.500a13 13 0 0 0-12.500 12M1614 1052.500a8 8 0 0 0-7.500 7" />
        <circle cx="1612.500" cy="1058.500" r="1.500" fill="#fff" stroke="none" />
        <path d="M1641.500 1046.500h3.500l5-5v17.500l-5-5h-3.500zM1653 1047.500q2 2.500 0 5" />
        <path d="M1656 1045q4 5 0 10M1659.500 1042.500q6 7.500 0 15" stroke="#777" />
        <rect x="1689.500" y="1040.500" width="32" height="18" rx="1" />
        <path d="M1693 1044.500h25M1693 1049.500h25" strokeDasharray="1.800 1.800" />
        <path d="M1693 1054.500h3M1698 1054.500h14M1715 1054.500h3" />
      </svg>
      <div className="w-[104px] pl-[11px] pt-[2px] text-white text-[17.5px] leading-7">
        <Fit w={74} className="ml-[4px]">10:47 PM</Fit>
        <Fit w={84}>9/12/2017</Fit>
      </div>
      <svg width="81" height="60" viewBox="1839 1020 81 60">
        <path d="M1858 1038h24v19h-12v5l-5.500-5H1858z" fill="#fff" />
        <path d="M1862.500 1043.500h15M1862.500 1047.500h15M1862.500 1051.500h10" stroke="#01040a" strokeWidth="1.200" />
        <circle cx="1881.500" cy="1061.500" r="12" fill="#2a2c2f" stroke="#77797b" strokeWidth="1.200" />
        <text x="1881.500" y="1067.500" textAnchor="middle" fill="#fff" className="text-[16px] font-semibold">1</text>
        <path d="M1913 1020v60" stroke="#6a6a6a" strokeWidth="2" />
      </svg>
    </div>
  );
}

export default function App() {
  return (
    <div className="w-[1920px] h-[1080px] overflow-hidden bg-black flex flex-col font-[Open_Sans,Noto_Sans,sans-serif]">
      <TabStrip />
      <AddressBar />
      <MenuBar />
      <Toolbar />
      <div className="h-[803px] mt-px flex shrink-0">
        <Palette />
        <Scrollbar />
        <div className="w-[11px] pl-[2px] pt-[353px] shrink-0">
          <div className="w-2 h-[98px] border border-[#2b78b8] bg-linear-to-b from-[#1b66ab] to-[#043f80] flex items-center justify-center">
            <div className="border-y-[3px] border-y-transparent border-r-[4px] border-r-white" />
          </div>
        </div>
        <Canvas />
      </div>
      <SimulationBar />
      <Taskbar />
    </div>
  );
}
